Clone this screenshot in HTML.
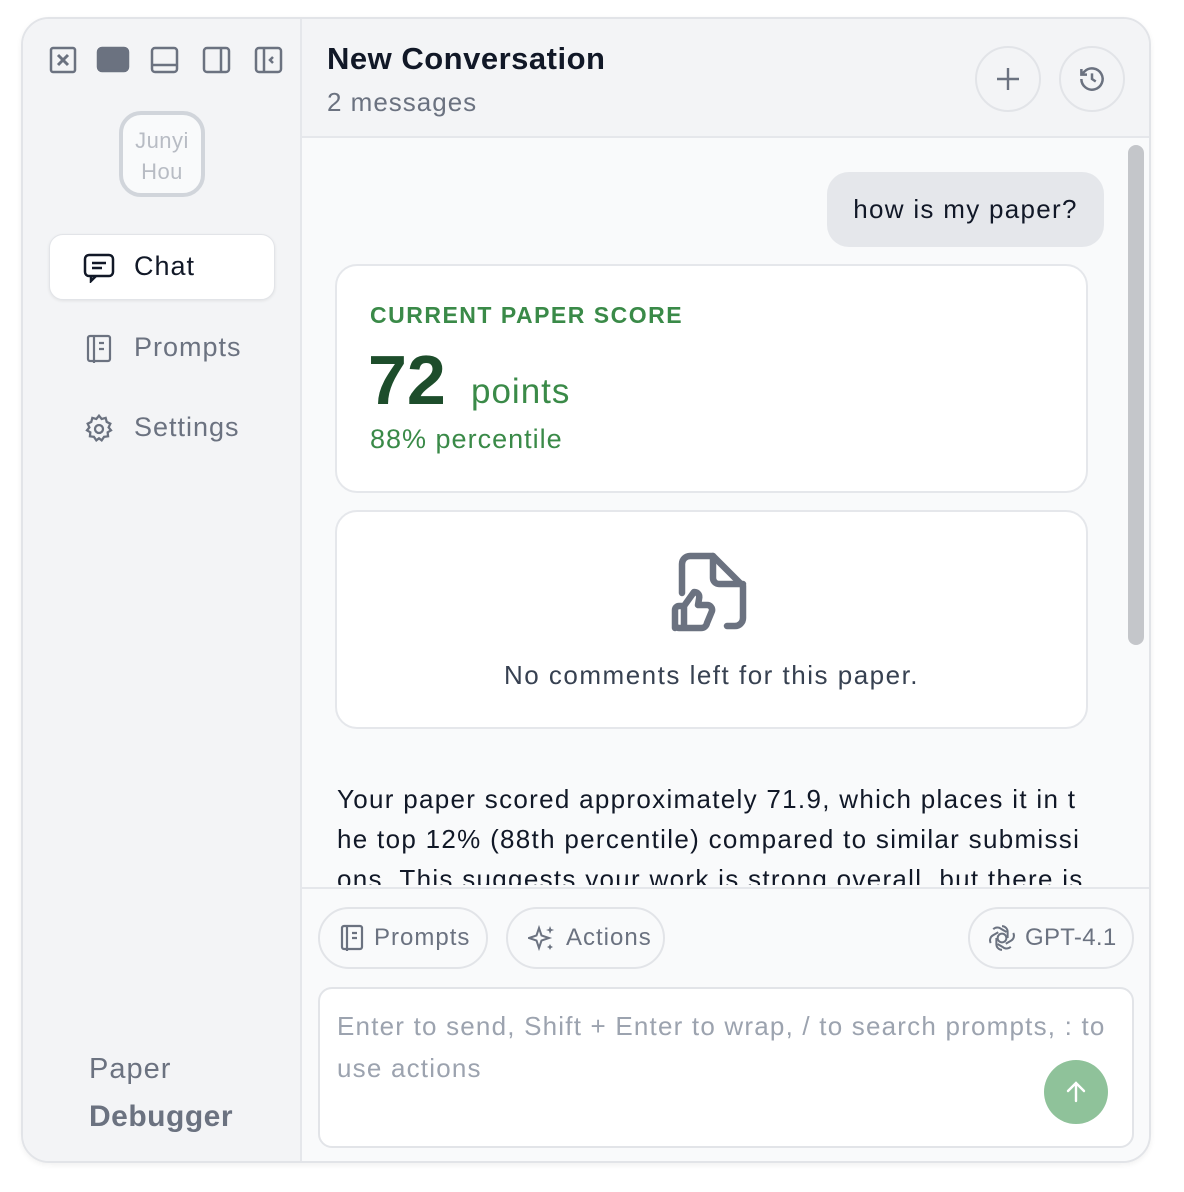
<!DOCTYPE html>
<html><head><style>
*{box-sizing:border-box;margin:0;padding:0}
body{width:1184px;height:1192px;background:#fff;font-family:"Liberation Sans",sans-serif;position:relative;overflow:hidden;letter-spacing:1px}
.win{position:absolute;left:21px;top:17px;width:1130px;height:1146px;border:2px solid #e2e4e8;border-radius:28px;overflow:hidden;background:#f9fafb;box-shadow:0 2px 6px rgba(0,0,0,.06)}
.side{position:absolute;left:0;top:0;width:279px;height:100%;background:#f3f4f6;border-right:2px solid #e5e7eb}
.main{position:absolute;left:279px;top:0;right:0;height:100%}
.hdr{position:absolute;left:0;top:0;right:0;height:119px;background:#f3f4f6;border-bottom:2px solid #e5e7eb}
.abs{position:absolute}
.card{position:absolute;background:#fff;border:2px solid #e5e7eb;border-radius:22px}
.pill{position:absolute;height:62px;border:2px solid #e2e4e8;border-radius:31px;background:#f9fafb;color:#6b7280;font-size:24px;display:flex;align-items:center;gap:10px;padding-left:20px}
.circ{position:absolute;width:66px;height:66px;border:2px solid #e2e4e8;border-radius:50%;display:flex;align-items:center;justify-content:center}
</style></head><body>
<div class="win">
 <div class="side">
  <svg class="abs" style="left:24px;top:26px" width="240" height="30" viewBox="0 0 240 30" fill="none" stroke="#6b7280" stroke-width="2.5">
   <rect x="4" y="3" width="24" height="24" rx="2"/><path d="M11 10l10 10M21 10l-10 10" stroke-width="3"/>
   <rect x="51" y="3" width="30" height="23" rx="4" fill="#6b7280"/>
   <rect x="105" y="3" width="25" height="24" rx="3"/><path d="M105 20h25"/>
   <rect x="157" y="3" width="25" height="24" rx="3"/><path d="M174 3v24"/>
   <rect x="209" y="3" width="25" height="24" rx="3"/><path d="M217 3v24M226 12l-3 3 3 3"/>
  </svg>
  <div class="abs" style="left:96px;top:92px;width:86px;height:86px;border:4px solid #d1d5db;border-radius:22px;background:#f9fafb;color:#b8bcc4;font-size:22px;text-align:center;line-height:31px;padding-top:10px;letter-spacing:0.5px">Junyi<br>Hou</div>
  <div class="abs" style="left:26px;top:215px;width:226px;height:66px;background:#fff;border:1px solid #e2e4e8;border-radius:14px;box-shadow:0 1px 3px rgba(0,0,0,.08)"></div>
  <svg class="abs" style="left:60px;top:234px" width="32" height="30" viewBox="0 0 32 30" fill="none" stroke="#111827" stroke-width="2.5"><rect x="2" y="2" width="28" height="21" rx="4"/><path d="M8 23l0 5 5-5M9 10h14M9 15h10"/></svg>
  <div class="abs" style="left:111px;top:232px;font-size:27px;color:#111827">Chat</div>
  <svg class="abs" style="left:62px;top:315px" width="28" height="30" viewBox="0 0 28 30" fill="none" stroke="#6b7280" stroke-width="2.2"><rect x="3" y="2" width="22" height="25" rx="2"/><path d="M9 2v27M14 9h5M14 15h5"/></svg>
  <div class="abs" style="left:111px;top:313px;font-size:27px;color:#6b7280">Prompts</div>
  <svg class="abs" style="left:60px;top:394px" width="32" height="32" viewBox="0 0 24 24" fill="none" stroke="#6b7280" stroke-width="1.7"><circle cx="12" cy="12" r="3"/><path d="M12 2l2 2.5 3-.8.8 3 2.7 1.3-1.3 2.8L21 13l-2.5 1.5.3 3-3 .4L14 20.5 12 19l-2 1.5-1.8-2.6-3-.4.3-3L3 13l1.8-2.2L3.5 8l2.7-1.3.8-3 3 .8z"/></svg>
  <div class="abs" style="left:111px;top:393px;font-size:27px;color:#6b7280">Settings</div>
  <div class="abs" style="left:66px;top:1034px;font-size:29px;color:#6b7280">Paper</div>
  <div class="abs" style="left:66px;top:1081px;font-size:30px;color:#6b7280;font-weight:bold;letter-spacing:0.5px">Debugger</div>
 </div>
 <div class="main">
  <div class="hdr">
   <div class="abs" style="left:25px;top:22px;font-size:31px;font-weight:bold;color:#111827;letter-spacing:0.5px">New Conversation</div>
   <div class="abs" style="left:25px;top:68px;font-size:26px;color:#6b7280">2 messages</div>
   <div class="circ" style="left:673px;top:27px"><svg width="26" height="26" viewBox="0 0 26 26" stroke="#6b7280" stroke-width="2.4"><path d="M13 2v22M2 13h22"/></svg></div>
   <div class="circ" style="left:757px;top:27px"><svg width="30" height="30" viewBox="0 0 24 24" fill="none" stroke="#6b7280" stroke-width="2"><path d="M3.5 12a8.5 8.5 0 1 0 2.5-6L3.5 8.5M3.5 4v4.5H8M12 7.5V12l3 2"/></svg></div>
  </div>
  <div class="abs" style="left:826px;top:126px;width:16px;height:500px;background:#c4c6ca;border-radius:8px"></div>
  <div class="abs" style="left:525px;top:153px;width:277px;height:75px;background:#e5e7eb;border-radius:22px;font-size:26px;color:#111827;line-height:75px;text-align:center;letter-spacing:1.3px">how is my paper?</div>
  <div class="card" style="left:33px;top:245px;width:753px;height:229px">
   <div class="abs" style="left:33px;top:36px;font-size:23px;font-weight:bold;letter-spacing:1.5px;color:#3a8a48">CURRENT PAPER SCORE</div>
   <div class="abs" style="left:31px;top:74px;font-size:70px;font-weight:bold;color:#1d4d2b;letter-spacing:0">72</div>
   <div class="abs" style="left:134px;top:106px;font-size:35px;color:#3a8a48">points</div>
   <div class="abs" style="left:33px;top:158px;font-size:27px;color:#3a8a48">88% percentile</div>
  </div>
  <div class="card" style="left:33px;top:491px;width:753px;height:219px">
   <svg class="abs" style="left:334px;top:38px" width="76" height="84" viewBox="0 0 76 84" fill="none" stroke="#6b7280" stroke-width="6.5" stroke-linecap="round" stroke-linejoin="round"><path d="M11 43V14a8 8 0 0 1 8-8h23l30 30v32a8 8 0 0 1-8 8h-8"/><path d="M42 6v22a6 6 0 0 0 6 6h24"/><path d="M4 78V60a4 4 0 0 1 4-4h5v22H8a4 4 0 0 1-4-4zM13 56l10-14c4 0 6 3 5 7l-1 6h9a5 5 0 0 1 5 6l-5 12a6 6 0 0 1-6 5H13"/></svg>
   <div class="abs" style="left:0;width:100%;top:148px;text-align:center;font-size:26px;color:#374151;letter-spacing:1.5px">No comments left for this paper.</div>
  </div>
  <div class="abs" style="left:35px;top:760px;width:752px;height:106px;overflow:hidden;font-size:26px;line-height:40px;color:#111827;word-break:break-all;letter-spacing:1.3px">Your paper scored approximately 71.9, which places it in the top 12% (88th percentile) compared to similar submissions. This suggests your work is strong overall, but there is</div>
  <div class="abs" style="left:0;top:868px;right:0;bottom:0;background:#f9fafb;border-top:2px solid #e5e7eb">
   <div class="pill" style="left:16px;top:18px;width:170px"><svg width="24" height="28" viewBox="0 0 24 28" fill="none" stroke="#6b7280" stroke-width="2.2"><rect x="2" y="2" width="20" height="23" rx="2"/><path d="M7 2v25M12 9h5M12 14h5"/></svg>Prompts</div>
   <div class="pill" style="left:204px;top:18px;width:159px"><svg width="28" height="28" viewBox="0 0 28 28" fill="#6b7280"><path d="M11 4l2.5 7.5L21 14l-7.5 2.5L11 24l-2.5-7.5L1 14l7.5-2.5z" fill="none" stroke="#6b7280" stroke-width="2"/><path d="M22 2l1.2 3 3 1-3 1L22 10l-1-3-3-1 3-1zM22 20l1 2 2 1-2 1-1 2-1-2-2-1 2-1z"/></svg>Actions</div>
   <div class="pill" style="left:666px;top:18px;width:166px;letter-spacing:0.3px;gap:8px;padding-left:17px"><svg width="30" height="30" viewBox="0 0 24 24" fill="none" stroke="#6b7280" stroke-width="1.6"><circle cx="12" cy="12" r="3.5"/><path d="M12 2.5a4.5 4.5 0 0 1 4.5 4.5v5M21 8a4.5 4.5 0 0 1-1.7 6.1l-4.3 2.5M19 19a4.5 4.5 0 0 1-6.3.3L8.4 16.8M12 21.5A4.5 4.5 0 0 1 7.5 17v-5M3 16a4.5 4.5 0 0 1 1.7-6.1L9 7.4M5 5a4.5 4.5 0 0 1 6.3-.3l4.3 2.5"/></svg>GPT-4.1</div>
   <div class="abs" style="left:16px;top:98px;width:816px;height:161px;background:#fff;border:2px solid #e2e4e8;border-radius:14px">
    <div class="abs" style="left:17px;top:16px;width:792px;font-size:26px;line-height:42px;color:#9ca3af;letter-spacing:1.2px">Enter to send, Shift + Enter to wrap, / to search prompts, : to use actions</div>
    <div class="abs" style="left:724px;top:71px;width:64px;height:64px;border-radius:50%;background:#8fc29a;display:flex;align-items:center;justify-content:center"><svg width="26" height="26" viewBox="0 0 26 26" fill="none" stroke="#fff" stroke-width="2.4" stroke-linecap="round"><path d="M13 22V4M5 12l8-8 8 8"/></svg></div>
   </div>
  </div>
 </div>
</div>
</body></html>
